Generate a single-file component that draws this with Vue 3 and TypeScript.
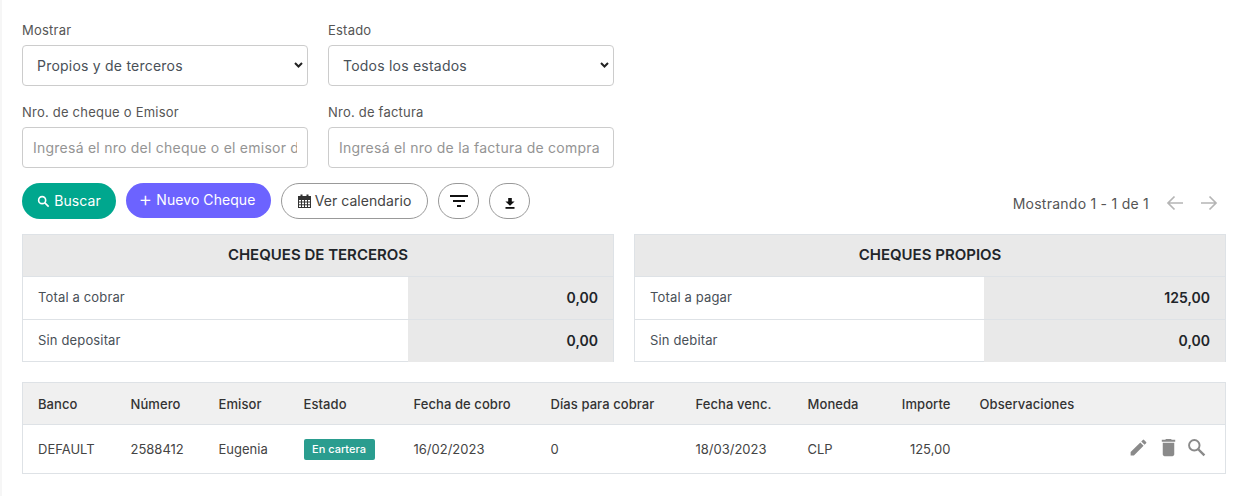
<script setup lang="ts">
interface Summary {
  title: string;
  rows: { label: string; value: string }[];
  labelWidth: string;
}
const summaries: Summary[] = [
  {
    title: "CHEQUES DE TERCEROS",
    labelWidth: "385px",
    rows: [
      { label: "Total a cobrar", value: "0,00" },
      { label: "Sin depositar", value: "0,00" },
    ],
  },
  {
    title: "CHEQUES PROPIOS",
    labelWidth: "349px",
    rows: [
      { label: "Total a pagar", value: "125,00" },
      { label: "Sin debitar", value: "0,00" },
    ],
  },
];
const colWidths = [93, 88, 85, 110, 137, 145, 112, 92, 80];
const headers = ["Banco", "Número", "Emisor", "Estado", "Fecha de cobro", "Días para cobrar", "Fecha venc.", "Moneda", "Importe", "Observaciones"];
</script>

<template>
  <div class="page">
    <div class="filters">
      <label class="field">
        <span class="lab">Mostrar</span>
        <select class="ctl sel"><option>Propios y de terceros</option></select>
      </label>
      <label class="field">
        <span class="lab">Estado</span>
        <select class="ctl sel"><option>Todos los estados</option></select>
      </label>
      <label class="field">
        <span class="lab">Nro. de cheque o Emisor</span>
        <input class="ctl inp" placeholder="Ingresá el nro del cheque o el emisor del cheque" />
      </label>
      <label class="field">
        <span class="lab">Nro. de factura</span>
        <input class="ctl inp" placeholder="Ingresá el nro de la factura de compra" />
      </label>
    </div>

    <div class="toolbar">
      <button class="btn green">
        <svg width="13" height="13" viewBox="0 0 24 24" fill="none" stroke="#fff" stroke-width="3"><circle cx="9.5" cy="9.5" r="6.5" /><path d="M14.5 14.5 21.5 21.5" /></svg>
        <span class="btxt">Buscar</span>
      </button>
      <button class="btn violet"><span class="plus">+</span> <span class="btxt">Nuevo Cheque</span></button>
      <button class="btn outline">
        <svg width="13" height="14" viewBox="0 0 13 14" fill="none" stroke="#333" stroke-width="1"><rect x="0.5" y="2.5" width="12" height="11" fill="none" /><path d="M0.5 5.5h12M0.5 8h12M0.5 10.8h12M3.5 5.5v8M6.5 5.5v8M9.5 5.5v8" /><path d="M3.5 0.5v3M9.5 0.5v3" stroke-width="2" /><path d="M0.5 4h12" stroke-width="3" /></svg>
        <span class="btxt">Ver calendario</span>
      </button>
      <button class="round">
        <svg width="18" height="13" viewBox="0 0 18 13" fill="#111"><rect x="0" y="0" width="18" height="2" /><rect x="3" y="5" width="12" height="2" /><rect x="7" y="10" width="4" height="2" /></svg>
      </button>
      <button class="round down">
        <svg width="10" height="11" viewBox="0 0 10 11" fill="#111"><path d="M3.2 0h3.6v3.6H9.6L5 7.8.4 3.6h2.8z" /><rect x="0.5" y="9" width="9" height="1.8" /></svg>
      </button>
      <div class="pager">
        <span class="ptext">Mostrando 1 - 1 de 1</span>
        <svg width="18" height="16" viewBox="0 0 18 16" fill="none" stroke="#b5b5b5" stroke-width="1.7"><path d="M17 8H2M8.5 1.5 2 8l6.5 6.5" /></svg>
        <svg width="18" height="16" viewBox="0 0 18 16" fill="none" stroke="#b5b5b5" stroke-width="1.7"><path d="M1 8h15M9.5 1.5 16 8l-6.5 6.5" /></svg>
      </div>
    </div>

    <div class="summaries">
      <section v-for="s in summaries" :key="s.title" class="summary">
        <h3>{{ s.title }}</h3>
        <div v-for="r in s.rows" :key="r.label" class="srow">
          <span class="slabel" :style="{ width: s.labelWidth }">{{ r.label }}</span>
          <strong class="svalue">{{ r.value }}</strong>
        </div>
      </section>
    </div>

    <table class="grid">
      <colgroup>
        <col v-for="(w, i) in colWidths" :key="i" :style="{ width: w + 'px' }" />
        <col />
      </colgroup>
      <thead>
        <tr>
          <th v-for="h in headers" :key="h" :class="{ right: h === 'Importe' }">{{ h }}</th>
        </tr>
      </thead>
      <tbody>
        <tr>
          <td>DEFAULT</td>
          <td>2588412</td>
          <td>Eugenia</td>
          <td><span class="badge">En cartera</span></td>
          <td>16/02/2023</td>
          <td>0</td>
          <td>18/03/2023</td>
          <td>CLP</td>
          <td class="right">125,00</td>
          <td>
            <div class="actions">
              <svg width="21" height="21" viewBox="0 0 24 24" fill="#8a8a8a"><path d="M3 17.25V21h3.75L17.81 9.94l-3.75-3.75L3 17.25zM20.71 7.04a1 1 0 0 0 0-1.41l-2.34-2.34a1 1 0 0 0-1.41 0l-1.83 1.83 3.75 3.75 1.83-1.83z" /></svg>
              <svg class="trash" width="23" height="23" viewBox="0 0 24 24" fill="#8a8a8a"><path d="M6 19c0 1.1.9 2 2 2h8c1.1 0 2-.9 2-2V7H6v12zM19 4h-3.5l-1-1h-5l-1 1H5v2h14V4z" /></svg>
              <svg width="21" height="21" viewBox="0 0 24 24" fill="none" stroke="#8a8a8a" stroke-width="2.2"><circle cx="9.5" cy="9.5" r="6" /><path d="M14 14l7 7" stroke-width="2.8" /></svg>
            </div>
          </td>
        </tr>
      </tbody>
    </table>
  </div>
</template>

<style>
html, body { margin: 0; background: #fff; }
</style>

<style scoped>
.page {
  box-sizing: border-box;
  width: 1237px;
  height: 496px;
  padding: 22px 11px 0 20px;
  border-left: 2px solid #f6f6f6;
  font-family: "Inter", "Liberation Sans", sans-serif;
  font-size: 13px;
  color: #444;
  overflow: hidden;
}
.filters {
  display: grid;
  grid-template-columns: 286px 286px;
  column-gap: 20px;
  row-gap: 18px;
}
.field { display: block; }
.lab {
  display: block;
  font-size: 13px;
  line-height: 16px;
  margin-bottom: 7px;
  color: #555;
  letter-spacing: 0.22px;
}
.ctl {
  box-sizing: border-box;
  display: block;
  width: 286px;
  height: 41px;
  border: 1px solid #ccc;
  border-radius: 4px;
  background-color: #fff;
  font-family: inherit;
  font-size: 14px;
  color: #495057;
  outline: none;
  letter-spacing: 0.22px;
}
.sel {
  appearance: none;
  padding: 0 24px 0 14px;
  background-image: url("data:image/svg+xml,%3Csvg xmlns='http://www.w3.org/2000/svg' width='9' height='6' viewBox='0 0 9 6'%3E%3Cpath d='M1 1l3.5 3.5L8 1' fill='none' stroke='%23222' stroke-width='2'/%3E%3C/svg%3E");
  background-repeat: no-repeat;
  background-position: 271px 16px;
}
.inp { padding: 0 10px; font-size: 14px; letter-spacing: 0.24px; }
.inp::placeholder { color: #949494; opacity: 1; }
.toolbar {
  display: flex;
  align-items: flex-start;
  gap: 10px;
  margin-top: 15px;
  height: 36px;
}
.btn {
  box-sizing: border-box;
  height: 36px;
  border-radius: 18px;
  border: 0;
  font-family: inherit;
  font-size: 14px;
  color: #fff;
  display: inline-flex;
  align-items: center;
  justify-content: center;
  gap: 4px;
  padding: 0;
}
.btxt { margin-top: -2px; letter-spacing: 0.06px; }
.green { background: #00a78e; width: 94px; }
.violet { background: #6c63ff; width: 145px; height: 35px; padding-right: 3px; }
.plus { font-size: 21px; line-height: 20px; font-weight: 300; margin-top: -4px; }
.outline { background: #fff; border: 1px solid #999; color: #444; width: 147px; }
.round {
  box-sizing: border-box;
  width: 41px;
  height: 36px;
  border-radius: 18px;
  border: 1px solid #999;
  background: #fff;
  padding: 0;
  display: inline-flex;
  align-items: center;
  justify-content: center;
}
.down { padding-top: 4px; }
.pager {
  margin-left: auto;
  height: 40px;
  display: flex;
  align-items: center;
  gap: 16px;
  color: #555;
  font-size: 14px;
  padding-right: 8px;
}
.ptext { letter-spacing: 0.25px; margin-right: 1px; }
.summaries {
  display: grid;
  grid-template-columns: 592px 592px;
  column-gap: 20px;
  margin-top: 15px;
}
.summary {
  box-sizing: border-box;
  border: 1px solid #dee2e6;
  height: 128px;
}
.summary h3 {
  margin: 0;
  height: 41px;
  line-height: 40px;
  text-align: center;
  font-size: 15px;
  font-weight: 600;
  color: #212529;
  background: #e9e9e9;
  border-bottom: 1px solid #dee2e6;
}
.srow {
  display: flex;
  height: 42px;
  border-bottom: 1px solid #dee2e6;
}
.srow:last-child { border-bottom: 0; }
.slabel {
  box-sizing: border-box;
  flex: none;
  padding-left: 15px;
  line-height: 40px;
  color: #495057;
  letter-spacing: 0.15px;
}
.svalue {
  flex: 1;
  text-align: right;
  padding-right: 15px;
  line-height: 41px;
  background: #e9e9e9;
  color: #212529;
  font-size: 14px;
  font-weight: 600;
}
.grid {
  box-sizing: border-box;
  width: 1204px;
  margin-top: 20px;
  border-collapse: collapse;
  table-layout: fixed;
  border: 1px solid #dee2e6;
}
.grid th {
  height: 41px;
  padding: 0 0 0 15px;
  background: #f0f0f0;
  border-bottom: 1px solid #dee2e6;
  text-align: left;
  font-weight: 500;
  font-size: 13px;
  color: #333;
  white-space: nowrap;
  letter-spacing: 0.08px;
}
.grid td {
  height: 48px;
  padding: 0 0 0 15px;
  font-size: 13px;
  color: #444;
  white-space: nowrap;
}
.grid .right { text-align: right; padding-right: 14px; }
.badge {
  display: inline-block;
  background: #2a9d8f;
  color: #fff;
  font-size: 11px;
  font-weight: 500;
  line-height: 21px;
  width: 71px;
  text-align: center;
  border-radius: 2px;
}
.actions {
  display: flex;
  justify-content: flex-end;
  gap: 7px;
  padding-right: 18px;
  align-items: center;
  margin-top: -4px;
}
.trash { margin-left: 1px; margin-right: -1px; }
</style>
